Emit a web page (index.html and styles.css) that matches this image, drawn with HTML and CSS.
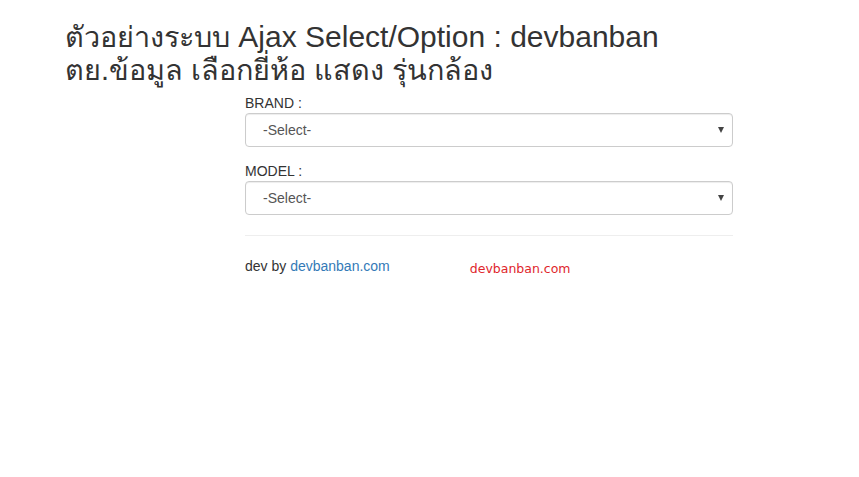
FILE: index.html
```html
<!DOCTYPE html>
<html lang="th">
<head>
<meta charset="utf-8">
<title>Ajax Select/Option : devbanban</title>
<link rel="stylesheet" href="styles.css">
</head>
<body>
<div class="page">
  <h2 class="title"><span class="th">ตัวอย่างระบบ</span> Ajax Select/Option : devbanban<br><span class="th">ตย.ข้อมูล เลือกยี่ห้อ แสดง รุ่นกล้อง</span></h2>
  <div class="panel">
    <div class="form-group">
      <label class="label">BRAND :</label>
      <div class="select-wrap">
        <select class="select"><option>-Select-</option></select>
      </div>
    </div>
    <div class="form-group">
      <label class="label">MODEL :</label>
      <div class="select-wrap">
        <select class="select"><option>-Select-</option></select>
      </div>
    </div>
    <hr class="divider">
    <div class="footer">
      <span class="credit">dev by <a class="link" href="#">devbanban.com</a></span>
      <span class="mark">devbanban.com</span>
    </div>
  </div>
</div>
</body>
</html>
```
FILE: styles.css
```css
html, body {
  margin: 0;
  padding: 0;
  background: #fff;
}
body {
  font-family: "Liberation Sans", Arial, sans-serif;
  font-size: 14px;
  line-height: 20px;
  color: #333;
}
.page {
  padding: 0 0 0 66px;
}
.title {
  margin: 20px 0 8px -1px;
  font-size: 30px;
  line-height: 33px;
  font-weight: 500;
  color: #333;
}
.th {
  font-size: 28.8px;
  line-height: 20px;
}
.panel {
  margin-left: 179px;
  width: 488px;
}
.form-group {
  margin-bottom: 15px;
}
.label {
  display: block;
  font-size: 14px;
  line-height: 19px;
  font-weight: normal;
  color: #333;
}
.select-wrap {
  position: relative;
}
.select-wrap::after {
  content: "";
  position: absolute;
  right: 9px;
  top: 14px;
  border-left: 3.5px solid transparent;
  border-right: 3.5px solid transparent;
  border-top: 6px solid #444;
  pointer-events: none;
}
.select {
  -webkit-appearance: none;
  appearance: none;
  display: block;
  box-sizing: border-box;
  width: 100%;
  height: 34px;
  margin: 0;
  padding: 0 12px 0 17px;
  font-family: "Liberation Sans", Arial, sans-serif;
  font-size: 14px;
  color: #555;
  background: #fff;
  border: 1px solid #ccc;
  border-radius: 4px;
  box-shadow: inset 0 1px 1px rgba(0,0,0,.075);
}
.divider {
  margin: 20px 0 20px;
  border: 0;
  border-top: 1px solid #eee;
}
.footer {
  display: flex;
  align-items: baseline;
}
.credit {
  color: #333;
}
.link {
  color: #337ab7;
  text-decoration: none;
}
.mark {
  margin-left: 80px;
  position: relative;
  top: 2px;
  font-family: "DejaVu Sans", sans-serif;
  font-size: 12.5px;
  color: #e0262c;
}
```
